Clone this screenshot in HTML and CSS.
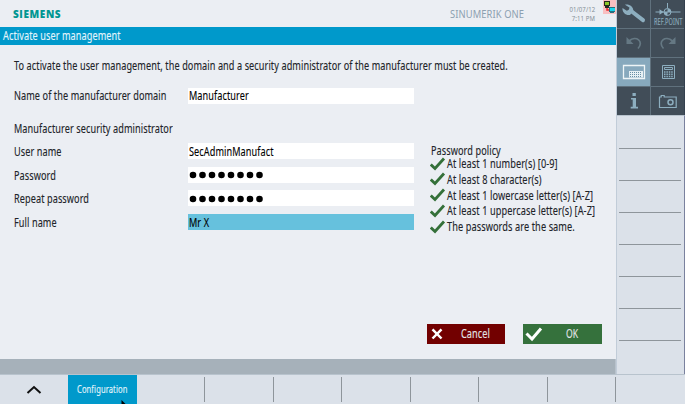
FILE: index.html
```html
<!DOCTYPE html>
<html lang="en">
<head>
<meta charset="utf-8">
<title>Activate user management</title>
<link rel="stylesheet" href="styles.css">
</head>
<body>
<div class="screen">
  <div class="upper">
    <main class="panel">
      <header class="header">
        <span class="brand">SIEMENS</span>
        <span class="product t">SINUMERIK ONE</span>
        <div class="clock"><span class="t">01/07/12</span><span class="t">7:11 PM</span></div>
        <svg class="net" viewBox="0 0 13 14"><path fill="#f8bfc1" d="M0 0h13v14H0z"/><path fill="#232a20" d="M1 1h6v5H1zM2 6h4v2H2z"/><path fill="#8bc72b" d="M2 2h4v3H2z"/><path d="M4 8v2h3" fill="none" stroke="#e9272b" stroke-width="1.5"/><path fill="#267080" d="M6 7h6v5H6zM7 12h4v1H7z"/><path fill="#18d7ef" d="M7 8h5v3H7z"/></svg>
      </header>
      <h1 class="title"><span class="t">Activate user management</span></h1>
      <section class="content">
        <p class="intro"><span class="t">To activate the user management, the domain and a security administrator of the manufacturer must be created.</span></p>
        <div class="row domain"><label class="label"><span class="t">Name of the manufacturer domain</span></label><div class="field"><span class="t">Manufacturer</span></div></div>
        <p class="subhead"><span class="t">Manufacturer security administrator</span></p>
        <div class="columns">
          <div class="form">
            <div class="row"><label class="label"><span class="t">User name</span></label><div class="field"><span class="t">SecAdminManufact</span></div></div>
            <div class="row"><label class="label"><span class="t">Password</span></label><div class="field"><svg class="dots" viewBox="0 0 80 16"><path d="M5 8h70"/></svg></div></div>
            <div class="row"><label class="label"><span class="t">Repeat password</span></label><div class="field"><svg class="dots" viewBox="0 0 80 16"><path d="M5 8h70"/></svg></div></div>
            <div class="row"><label class="label"><span class="t">Full name</span></label><div class="field active"><span class="t">Mr X</span></div></div>
          </div>
          <div class="policy">
            <h2 class="policy-title"><span class="t">Password policy</span></h2>
            <ul class="rules">
              <li><svg viewBox="0 0 16 14"><path d="M.8 7.500 5 11.500 14 1.500"/></svg><span class="t">At least 1 number(s) [0-9]</span></li>
              <li><svg viewBox="0 0 16 14"><path d="M.8 7.500 5 11.500 14 1.500"/></svg><span class="t">At least 8 character(s)</span></li>
              <li><svg viewBox="0 0 16 14"><path d="M.8 7.500 5 11.500 14 1.500"/></svg><span class="t">At least 1 lowercase letter(s) [A-Z]</span></li>
              <li><svg viewBox="0 0 16 14"><path d="M.8 7.500 5 11.500 14 1.500"/></svg><span class="t">At least 1 uppercase letter(s) [A-Z]</span></li>
              <li><svg viewBox="0 0 16 14"><path d="M.8 7.500 5 11.500 14 1.500"/></svg><span class="t">The passwords are the same.</span></li>
            </ul>
          </div>
        </div>
        <div class="actions">
          <div class="button cancel"><svg viewBox="0 0 20 20"><path d="m5.500 5.300 9 9.200m0-9.200-9 9.200"/></svg><span class="t">Cancel</span></div>
          <div class="button ok"><svg viewBox="0 0 20 20"><path d="m3.500 9.500 5.500 5.500L18 4.500"/></svg><span class="t">OK</span></div>
        </div>
      </section>
      <div class="status"></div>
    </main>
    <aside class="side">
      <div class="tools">
        <div class="tool"><svg viewBox="0 0 34 28"><path d="m13.500 10.500 12.500 9.700" fill="none" stroke="#8daebf" stroke-width="4" stroke-linecap="round"/><path fill="#8daebf" d="m5.500 8 4.300 2.800 2.300-1 .3-2.300L8 4.700c4.500-.7 8.500 2 8.300 6.300L13 15c-4 .8-8-2.500-7.500-7z"/></svg></div>
        <div class="tool ref"><svg viewBox="0 0 34 28"><g fill="none" stroke="#8daebf"><path d="M4.500 12h25M16.500 3v5"/><circle cx="16.500" cy="12" r="3.500"/></g><path fill="#8daebf" d="m8.500 9.200 4 2.800-4 2.800zM16.500 8.500V12H20a3.500 3.500 0 0 0-3.500-3.500zM13 12h3.500v3.500A3.500 3.500 0 0 1 13 12z"/></svg><span class="t">REF.POINT</span></div>
        <div class="tool"><svg viewBox="0 0 34 28"><path d="M12 12C19 6 27.500 12.500 21 19.500" fill="none" stroke="#657883" stroke-width="1.700"/><path fill="#657883" d="M9.500 8v7h7z"/></svg></div>
        <div class="tool"><svg viewBox="0 0 34 28"><path d="M21.500 12C14.500 6 6 12.500 12.500 19.500" fill="none" stroke="#657883" stroke-width="1.700"/><path fill="#657883" d="M24.500 8v7h-7z"/></svg></div>
        <div class="tool selected"><svg viewBox="0 0 34 28"><path d="M6.500 7.500h21v13h-21z" fill="none" stroke="#eef5f7" stroke-width="1.300"/><path fill="#e6f0f4" d="M12 13h14v6.500H12z"/><path d="M13 14.500h12m-12 2h12m-12 2h12" stroke="#688fa4" stroke-dasharray="1 1"/></svg></div>
        <div class="tool"><svg viewBox="0 0 34 28"><path d="M11.500 7.500h12v13h-12z" fill="none" stroke="#8daebf"/><path d="M13.500 9.500h8v2h-8z" fill="none" stroke="#8daebf"/><path d="M13 14h9m-9 2.300h9m-9 2.200h9" stroke="#8daebf" stroke-width="1.500" stroke-dasharray="1.500 .9"/></svg></div>
        <div class="tool"><svg viewBox="0 0 34 28"><path fill="#8daebf" d="M15.500 6h3.300v3h-3.300zM14 11h5v8.800h2v1.700h-7.300v-1.700h2v-7.200H14z"/></svg></div>
        <div class="tool"><svg viewBox="0 0 34 28"><path d="M8.500 20.500V10h1.700V8.500h3V10h12v10.500z" fill="none" stroke="#8daebf" stroke-width="1.200"/><circle cx="19.500" cy="15.200" r="2.500" fill="none" stroke="#8daebf" stroke-width="1.500"/></svg></div>
      </div>
      <div class="softkeys"><i></i><i></i><i></i><i></i><i></i><i></i><i></i><i></i></div>
    </aside>
  </div>
  <footer class="bottom">
    <div class="up"><svg viewBox="0 0 16 10"><path d="m1.500 8 6.500-6 6.500 6"/></svg></div>
    <div class="key current"><span class="t">Configuration</span><svg class="pointer" viewBox="0 0 5 4"><path d="M.5 0v4h4z"/></svg></div>
    <div class="key"></div><div class="key"></div><div class="key"></div><div class="key"></div><div class="key"></div><div class="key"></div><div class="key"></div><div class="key last"></div>
  </footer>
</div>
</body>
</html>
```
FILE: styles.css
```css
* { box-sizing: border-box; }
body { margin: 0; overflow: hidden; font: 12px/16px "Noto Sans", "Open Sans", sans-serif; color: #202328; }
h1, h2, p, ul { margin: 0; padding: 0; font-size: inherit; font-weight: 400; }
.t { display: inline-block; white-space: nowrap; letter-spacing: .12px; transform: scaleX(.76); transform-origin: left center; -webkit-text-stroke: .12px currentColor; }
.screen { width: 685px; height: 404px; background: #dbe1e9; display: flex; flex-direction: column; }
.upper { display: flex; height: 374px; }
.panel { width: 616px; display: flex; flex-direction: column; background: #ebeef3; }
.header { position: relative; height: 27px; flex: none; display: flex; padding-left: 13px; }
.brand { width: 437px; font: 800 10px/28px "Open Sans", sans-serif; color: #009692; letter-spacing: .6px; }
.product { width: 100px; font-size: 11px; line-height: 28px; color: #8ca0b0; transform: scaleX(.85); -webkit-text-stroke: 0; }
.clock { position: absolute; right: 21px; top: 5px; display: flex; flex-direction: column; align-items: flex-end; font-size: 7.5px; line-height: 8.5px; color: #858e97; }
.clock .t { transform: scaleX(.8); transform-origin: right center; -webkit-text-stroke: 0; }
.net { position: absolute; right: 0; top: 0; width: 13px; height: 14px; }
.title { height: 18px; flex: none; background: #0099cb; color: #e4f5fc; padding-left: 3px; line-height: 18px; }
.content { flex: 1; padding: 12px 0 0 14px; }
.intro { height: 31px; line-height: 17px; }
.row { display: flex; height: 16px; }
.label { width: 174px; }
.field { width: 226px; height: 16px; padding-left: 1px; background: #fff; color: #000; }
.field.active { background: #66c1dd; }
.domain { margin-bottom: 17px; }
.subhead { height: 22px; }
.columns { display: flex; gap: 16px; height: 99px; }
.form { display: flex; flex-direction: column; gap: 7.7px; }
.form .row { line-height: 17px; }
.dots { display: block; width: 80px; height: 16px; margin: .4px 0 0 -.6px; fill: none; stroke: #000; stroke-width: 6.6; stroke-linecap: round; stroke-dasharray: 0 9.5; }
.policy-title { height: 13px; line-height: 15px; padding-left: 1px; }
.rules { list-style: none; }
.rules li { display: flex; height: 15.8px; line-height: 15px; }
.rules .t { transform: scaleX(.765); margin-left: .5px; }
.rules svg { width: 16px; height: 14px; margin-top: .5px; fill: none; stroke: #347039; stroke-width: 2.8; flex: none; }
.actions { display: flex; gap: 18px; margin: 82px 0 0 413px; }
.button { width: 78px; height: 20px; display: flex; align-items: center; line-height: 20px; color: #e3e4e6; }
.button svg { width: 20px; height: 20px; fill: none; stroke: #fff; stroke-width: 2.5; }
.cancel { background: #720000; }
.cancel .t { margin-left: 14px; }
.ok { width: 79px; background: #35713c; }
.ok svg { stroke-width: 3; }
.ok .t { margin-left: 23px; transform: scaleX(.72); }
.status { height: 15px; flex: none; background: #a6b1ba; border-right: 1px solid #b8c2cc; }
.side { width: 69px; border-left: 1px solid #c1ccd8; display: flex; flex-direction: column; }
.tools { display: grid; grid-template-columns: 33px 33px; grid-template-rows: repeat(4, 28px); gap: 1px; background: #60717d; border-right: 1px solid #34404e; height: 115px; }
.tool { position: relative; background: #414d58; }
.tool svg { display: block; width: 34px; height: 28px; }
.tool.selected { background: #87a9bd; }
.ref .t { position: absolute; left: 3px; top: 16px; font-size: 8.5px; line-height: 11px; color: #8daebf; transform: scaleX(.66); }
.softkeys { flex: 1; padding: 1px 3px 0 2px; border-top: 1px solid #b8c3cd; border-right: 1px solid #7a819e; }
.softkeys i { display: block; height: 32px; border-bottom: 1px solid #8e959b; }
.softkeys i:last-child { border: 0; }
.bottom { display: flex; height: 30px; border-top: 1px solid #b8c3cd; padding-right: 1px; overflow: hidden; }
.up { width: 68.4px; flex: none; display: flex; align-items: center; justify-content: center; }
.up svg { width: 16px; height: 10px; fill: none; stroke: #111; stroke-width: 2; }
.key { width: 68.5px; flex: none; background: linear-gradient(#8e959b, #8e959b) right 2px / 1px 25px no-repeat; }
.key.last { background: none; }
.current { position: relative; background: #0099cb; color: #e4f5fc; font-size: 10px; line-height: 29px; padding-left: 9px; }
.pointer { position: absolute; right: 11px; bottom: 0; width: 5px; height: 4px; }
```
